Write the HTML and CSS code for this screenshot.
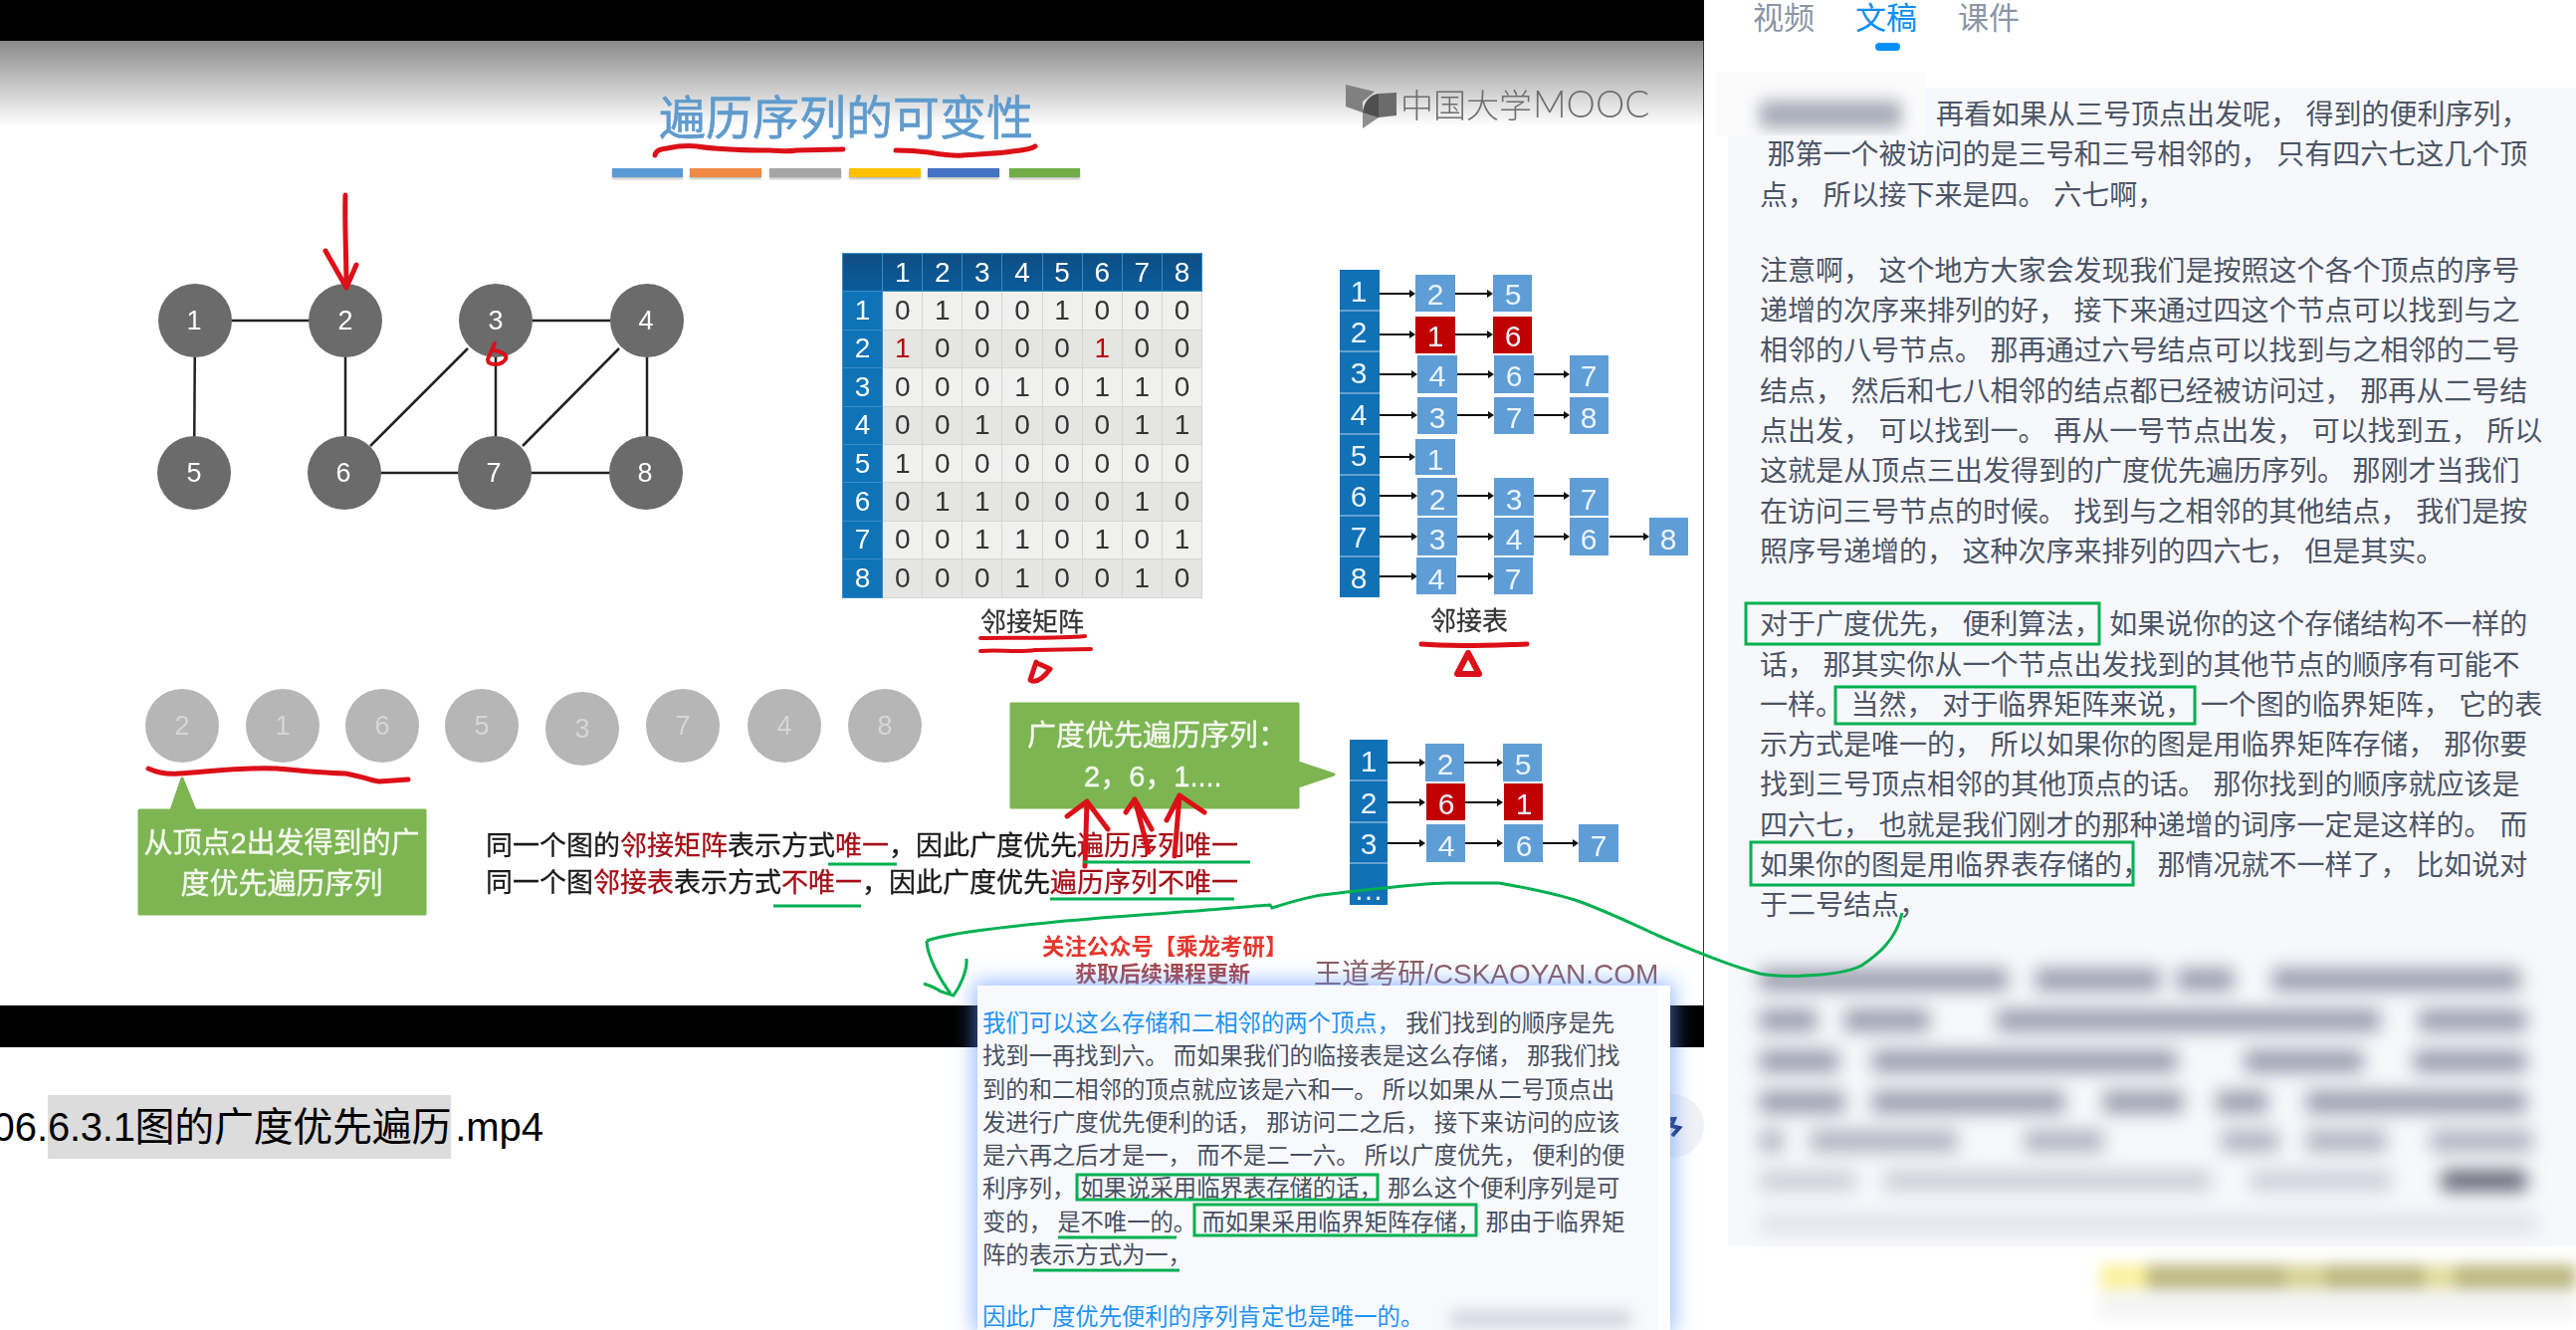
FILE: index.html

```html
<!DOCTYPE html>
<html lang="zh-CN">
<head>
    <title>图的广度优先遍历</title>
    <meta charset="UTF-8">
    <link rel="stylesheet" href="styles.css">
</head>
<body>
<div class="page">
    <div class="player">
        <div class="video">
            <div class="slide">
                <svg class="slide-art" width="1711" height="969" viewBox="0 41 1711 969">
                    <!-- title -->
                    <text class="title" x="662" y="135">遍历序列的可变性</text>
                    <rect class="bar" x="615" y="169" width="71" height="9" fill="#5b9bd5"/>
                    <rect class="bar" x="693" y="169" width="72" height="9" fill="#ee8a44"/>
                    <rect class="bar" x="773" y="169" width="72" height="9" fill="#a5a5a5"/>
                    <rect class="bar" x="853" y="169" width="72" height="9" fill="#ffc000"/>
                    <rect class="bar" x="932" y="169" width="72" height="9" fill="#4472c4"/>
                    <rect class="bar" x="1014" y="169" width="71" height="9" fill="#70ad47"/>

                    <!-- mooc logo -->
                    <polygon fill="#808080" points="1352,85 1381,92 1369,102 1369,113 1352,107"/>
                    <polygon fill="#6b6b6b" points="1385,94 1403,93 1403,116 1385,118"/>
                    <path fill="#4f4f4f" d="M1369,113 C1370,103 1376,95 1385,94 L1385,118 L1369,124 Z"/>
                    <polygon fill="#8f8f8f" points="1369,113 1385,118 1369,129"/>
                    <text class="logo-cn" x="1407" y="118">中国大学</text>
                    <text class="logo-en" x="1540" y="118">MOOC</text>

                    <!-- graph -->
                    <g class="edges">
                        <line x1="196" y1="322" x2="347" y2="322"/>
                        <line x1="196" y1="322" x2="195" y2="475"/>
                        <line x1="347" y1="322" x2="347" y2="475"/>
                        <line x1="498" y1="322" x2="650" y2="322"/>
                        <line x1="498" y1="322" x2="498" y2="475"/>
                        <line x1="650" y1="322" x2="650" y2="475"/>
                        <line x1="346" y1="475" x2="649" y2="475"/>
                        <line x1="470" y1="350" x2="372" y2="448"/>
                        <line x1="622" y1="350" x2="525" y2="448"/>
                    </g>
                    <g class="node">
                        <ellipse cx="196" cy="322" rx="37" ry="37"/><text x="195" y="322">1</text>
                        <ellipse cx="347" cy="322" rx="37" ry="37"/><text x="347" y="322">2</text>
                        <ellipse cx="498" cy="322" rx="37" ry="37"/><text x="498" y="322">3</text>
                        <ellipse cx="650" cy="322" rx="37" ry="37"/><text x="649" y="322">4</text>
                        <ellipse cx="195" cy="475" rx="37" ry="37"/><text x="195" y="475">5</text>
                        <ellipse cx="346" cy="475" rx="37" ry="37"/><text x="345" y="475">6</text>
                        <ellipse cx="497" cy="475" rx="37" ry="37"/><text x="496" y="475">7</text>
                        <ellipse cx="649" cy="475" rx="37" ry="37"/><text x="648" y="475">8</text>
                    </g>

                    <!-- visit order -->
                    <g class="node faded">
                        <ellipse cx="183" cy="729" rx="37" ry="37"/><text x="183" y="729">2</text>
                        <ellipse cx="284" cy="729" rx="37" ry="37"/><text x="284" y="729">1</text>
                        <ellipse cx="384" cy="729" rx="37" ry="37"/><text x="384" y="729">6</text>
                        <ellipse cx="484" cy="729" rx="37" ry="37"/><text x="484" y="729">5</text>
                        <ellipse cx="585" cy="732" rx="37" ry="37"/><text x="585" y="732">3</text>
                        <ellipse cx="686" cy="729" rx="37" ry="37"/><text x="686" y="729">7</text>
                        <ellipse cx="788" cy="729" rx="37" ry="37"/><text x="788" y="729">4</text>
                        <ellipse cx="889" cy="729" rx="37" ry="37"/><text x="889" y="729">8</text>
                    </g>

                    <!-- green callouts -->
                    <path class="callout" d="M183,782 L196,814 L427,814 L427,918 L140,918 L140,814 L172,814 Z"/>
                    <text class="callout-text" x="283" y="857">从顶点2出发得到的广</text>
                    <text class="callout-text" x="283" y="898">度优先遍历序列</text>
                    <path class="callout" d="M1016,707 L1304,707 L1304,766 L1340,778 L1304,790 L1304,811 L1016,811 Z"/>
                    <text class="callout-left" x="1032" y="749">广度优先遍历序列：</text>
                    <text class="callout-left" x="1089" y="790">2，6，1....</text>

                    <!-- statements -->
                    <text class="note" x="488" y="859">同一个图的<tspan class="dark-red">邻接矩阵</tspan>表示方式<tspan class="dark-red">唯一</tspan>，因此广度优先<tspan class="dark-red">遍历序列唯一</tspan></text>
                    <text class="note" x="488" y="896">同一个图<tspan class="dark-red">邻接表</tspan>表示方式<tspan class="dark-red">不唯一</tspan>，因此广度优先<tspan class="dark-red">遍历序列不唯一</tspan></text>

                    <text class="caption" x="1037" y="634">邻接矩阵</text>
                    <text class="caption" x="1476" y="633">邻接表</text>

                    <!-- adjacency list, full -->
                    <g class="list">
                        <rect class="head" x="1346" y="271" width="40" height="329"/>
                        <g class="sep">
                            <line x1="1346" y1="312" x2="1386" y2="312"/>
                            <line x1="1346" y1="353" x2="1386" y2="353"/>
                            <line x1="1346" y1="395" x2="1386" y2="395"/>
                            <line x1="1346" y1="436" x2="1386" y2="436"/>
                            <line x1="1346" y1="477" x2="1386" y2="477"/>
                            <line x1="1346" y1="518" x2="1386" y2="518"/>
                            <line x1="1346" y1="559" x2="1386" y2="559"/>
                        </g>
                        <text x="1365" y="292">1</text><text x="1365" y="333">2</text>
                        <text x="1365" y="374">3</text><text x="1365" y="416">4</text>
                        <text x="1365" y="457">5</text><text x="1365" y="498">6</text>
                        <text x="1365" y="539">7</text><text x="1365" y="580">8</text>

                        <g class="arrows">
                            <path d="M1386,295H1416M1462,295H1494"/>
                            <path d="M1386,336H1416M1462,336H1494"/>
                            <path d="M1386,376H1418M1464,376H1495M1541,376H1571"/>
                            <path d="M1386,417H1418M1464,417H1495M1541,417H1571"/>
                            <path d="M1386,459H1416"/>
                            <path d="M1386,498H1418M1464,498H1495M1541,498H1571"/>
                            <path d="M1386,539H1418M1464,539H1495M1541,539H1571M1617,539H1651"/>
                            <path d="M1386,579H1418M1464,579H1495"/>
                            <path class="tips" d="M1416,291l6,4l-6,4zM1494,291l6,4l-6,4zM1416,332l6,4l-6,4zM1494,332l6,4l-6,4zM1418,372l6,4l-6,4zM1495,372l6,4l-6,4zM1571,372l6,4l-6,4zM1418,413l6,4l-6,4zM1495,413l6,4l-6,4zM1571,413l6,4l-6,4zM1416,455l6,4l-6,4zM1418,494l6,4l-6,4zM1495,494l6,4l-6,4zM1571,494l6,4l-6,4zM1418,535l6,4l-6,4zM1495,535l6,4l-6,4zM1571,535l6,4l-6,4zM1651,535l6,4l-6,4zM1418,575l6,4l-6,4zM1495,575l6,4l-6,4z"/>
                        </g>

                        <rect x="1422" y="276" width="40" height="37"/><text x="1442" y="295">2</text>
                        <rect x="1500" y="276" width="39" height="37"/><text x="1520" y="295">5</text>
                        <rect class="hot" x="1422" y="318" width="40" height="37"/><text x="1442" y="337">1</text>
                        <rect class="hot" x="1500" y="318" width="39" height="37"/><text x="1520" y="337">6</text>
                        <rect x="1424" y="357" width="40" height="38"/><text x="1444" y="377">4</text>
                        <rect x="1501" y="357" width="40" height="38"/><text x="1521" y="377">6</text>
                        <rect x="1577" y="357" width="39" height="38"/><text x="1596" y="377">7</text>
                        <rect x="1424" y="399" width="40" height="37"/><text x="1444" y="419">3</text>
                        <rect x="1501" y="399" width="40" height="37"/><text x="1521" y="419">7</text>
                        <rect x="1577" y="399" width="39" height="37"/><text x="1596" y="419">8</text>
                        <rect x="1422" y="441" width="40" height="36"/><text x="1442" y="461">1</text>
                        <rect x="1424" y="480" width="40" height="38"/><text x="1444" y="501">2</text>
                        <rect x="1501" y="480" width="40" height="38"/><text x="1521" y="501">3</text>
                        <rect x="1577" y="480" width="39" height="38"/><text x="1596" y="501">7</text>
                        <rect x="1424" y="520" width="40" height="38"/><text x="1444" y="541">3</text>
                        <rect x="1501" y="520" width="40" height="38"/><text x="1521" y="541">4</text>
                        <rect x="1577" y="520" width="39" height="38"/><text x="1596" y="541">6</text>
                        <rect x="1657" y="520" width="39" height="38"/><text x="1676" y="541">8</text>
                        <rect x="1423" y="560" width="40" height="37"/><text x="1443" y="581">4</text>
                        <rect x="1501" y="560" width="39" height="37"/><text x="1520" y="581">7</text>
                    </g>

                    <!-- adjacency list, second storage -->
                    <g class="list">
                        <rect class="head" x="1356" y="743" width="38" height="166"/>
                        <g class="sep">
                            <line x1="1356" y1="784" x2="1394" y2="784"/>
                            <line x1="1356" y1="826" x2="1394" y2="826"/>
                            <line x1="1356" y1="867" x2="1394" y2="867"/>
                        </g>
                        <text x="1375" y="764">1</text><text x="1375" y="806">2</text><text x="1375" y="847">3</text>
                        <text x="1375" y="893">…</text>
                        <g class="arrows">
                            <path d="M1394,766H1426M1471,766H1504"/>
                            <path d="M1394,806H1426M1471,806H1504"/>
                            <path d="M1394,847H1426M1471,847H1504M1549,847H1580"/>
                            <path class="tips" d="M1426,762l6,4l-6,4zM1504,762l6,4l-6,4zM1426,802l6,4l-6,4zM1504,802l6,4l-6,4zM1426,843l6,4l-6,4zM1504,843l6,4l-6,4zM1580,843l6,4l-6,4z"/>
                        </g>
                        <rect x="1432" y="747" width="39" height="38"/><text x="1452" y="767">2</text>
                        <rect x="1510" y="747" width="39" height="38"/><text x="1530" y="767">5</text>
                        <rect class="hot" x="1433" y="787" width="39" height="37"/><text x="1453" y="807">6</text>
                        <rect class="hot" x="1511" y="787" width="39" height="37"/><text x="1531" y="807">1</text>
                        <rect x="1433" y="828" width="39" height="38"/><text x="1453" y="849">4</text>
                        <rect x="1511" y="828" width="39" height="38"/><text x="1531" y="849">6</text>
                        <rect x="1586" y="828" width="40" height="38"/><text x="1606" y="849">7</text>
                    </g>

                    <!-- watermark -->
                    <text class="mark-red" x="1047" y="959">关注公众号【乘龙考研】</text>
                    <text class="mark-dim" x="1080" y="986">获取后续课程更新</text>
                    <text class="mark-site" x="1320" y="988">王道考研/CSKAOYAN.COM</text>

                    <!-- pen strokes on the video -->
                    <g class="pen">
                        <path d="M658,156 C659,151 663,150 670,149 C680,147 690,146 700,147 C720,150 750,151 773,151 C785,152 795,152 800,151 L847,150"/>
                        <path d="M900,151 C910,151 925,152 933,153 C945,155 955,157 967,156 C985,155 1005,154 1017,152 C1028,151 1036,150 1040,147"/>
                        <path d="M347,196 C346,220 348,260 348,289 M327,252 L348,289 L358,266"/>
                        <path class="thin" d="M497,345 L490,361 C490,367 500,367 505,364 C510,360 511,355 497,352"/>
                        <path d="M149,772 C160,777 170,778 180,777 C210,775 250,770 278,772 C310,775 330,777 347,777 C365,780 375,785 381,785 L410,783"/>
                        <path class="thin" d="M985,641 C1010,640 1060,642 1090,639"/>
                        <path class="thin" d="M985,654 C1005,652 1020,656 1040,653 L1096,652"/>
                        <path d="M1041,665 L1035,683 C1040,686 1046,684 1055,672 L1044,667"/>
                        <path d="M1428,647 C1460,650 1500,648 1534,647"/>
                        <path class="wide" d="M1475,656 L1464,677 L1486,677 Z"/>
                        <path d="M1090,870 L1092,805 M1072,820 L1092,805 L1113,833"/>
                        <path d="M1154,856 L1140,803 M1131,816 L1140,803 L1157,833"/>
                        <path d="M1180,860 L1185,799 M1172,824 L1185,799 L1210,816"/>
                    </g>
                </svg>

                <table class="matrix">
                    <tr><th></th><th>1</th><th>2</th><th>3</th><th>4</th><th>5</th><th>6</th><th>7</th><th>8</th></tr>
                    <tr><th>1</th><td>0</td><td>1</td><td>0</td><td>0</td><td>1</td><td>0</td><td>0</td><td>0</td></tr>
                    <tr><th>2</th><td class="red">1</td><td>0</td><td>0</td><td>0</td><td>0</td><td class="red">1</td><td>0</td><td>0</td></tr>
                    <tr><th>3</th><td>0</td><td>0</td><td>0</td><td>1</td><td>0</td><td>1</td><td>1</td><td>0</td></tr>
                    <tr><th>4</th><td>0</td><td>0</td><td>1</td><td>0</td><td>0</td><td>0</td><td>1</td><td>1</td></tr>
                    <tr><th>5</th><td>1</td><td>0</td><td>0</td><td>0</td><td>0</td><td>0</td><td>0</td><td>0</td></tr>
                    <tr><th>6</th><td>0</td><td>1</td><td>1</td><td>0</td><td>0</td><td>0</td><td>1</td><td>0</td></tr>
                    <tr><th>7</th><td>0</td><td>0</td><td>1</td><td>1</td><td>0</td><td>1</td><td>0</td><td>1</td></tr>
                    <tr><th>8</th><td>0</td><td>0</td><td>0</td><td>1</td><td>0</td><td>0</td><td>1</td><td>0</td></tr>
                </table>
            </div>
        </div>

        <div class="file-name">06.<span class="selected">6.3.1图的广度优先遍历</span>.mp4</div>

        <div class="share-btn">
            <svg width="64" height="64" viewBox="0 0 64 64"><path d="M24,25 H34 L31,32 L39,34 L32,42"/></svg>
        </div>
    </div>

    <div class="side">
        <div class="tabs">
            <div class="tab">视频</div>
            <div class="tab active">文稿</div>
            <div class="tab">课件</div>
        </div>
        <div class="transcript">
            <div class="lead-patch"><span class="lead-blur"></span></div>
            <p class="para first">再看如果从三号顶点出发呢， 得到的便利序列，<br>&nbsp;那第一个被访问的是三号和三号相邻的， 只有四六七这几个顶<br>点， 所以接下来是四。 六七啊，</p>
            <p class="para second">注意啊， 这个地方大家会发现我们是按照这个各个顶点的序号<br>递增的次序来排列的好， 接下来通过四这个节点可以找到与之<br>相邻的八号节点。 那再通过六号结点可以找到与之相邻的二号<br>结点， 然后和七八相邻的结点都已经被访问过， 那再从二号结<br>点出发， 可以找到一。 再从一号节点出发， 可以找到五， 所以<br>这就是从顶点三出发得到的广度优先遍历序列。 那刚才当我们<br>在访问三号节点的时候。 找到与之相邻的其他结点， 我们是按<br>照序号递增的， 这种次序来排列的四六七， 但是其实。</p>
            <p class="para third">对于广度优先， 便利算法， 如果说你的这个存储结构不一样的<br>话， 那其实你从一个节点出发找到的其他节点的顺序有可能不<br>一样。 当然， 对于临界矩阵来说， 一个图的临界矩阵， 它的表<br>示方式是唯一的， 所以如果你的图是用临界矩阵存储， 那你要<br>找到三号顶点相邻的其他顶点的话。 那你找到的顺序就应该是<br>四六七， 也就是我们刚才的那种递增的词序一定是这样的。 而<br>如果你的图是用临界表存储的， 那情况就不一样了， 比如说对<br>于二号结点，</p>
            <svg class="blurred" width="852" height="301">
                <defs><filter id="soft" x="-5%" y="-10%" width="110%" height="120%"><feGaussianBlur stdDeviation="9"/></filter></defs>
                <g filter="url(#soft)" fill="#989cac">
                    <rect x="32" y="18" width="249" height="22"/><rect x="309" y="18" width="125" height="22"/><rect x="451" y="18" width="57" height="22"/><rect x="547" y="18" width="249" height="22"/>
                    <rect x="32" y="59" width="57" height="22"/><rect x="117" y="59" width="85" height="22"/><rect x="270" y="59" width="385" height="22"/><rect x="694" y="59" width="108" height="22"/>
                    <rect x="32" y="100" width="79" height="22"/><rect x="145" y="100" width="306" height="22"/><rect x="519" y="100" width="119" height="22"/><rect x="689" y="100" width="113" height="22"/>
                    <rect x="32" y="141" width="85" height="22"/><rect x="145" y="141" width="193" height="22"/><rect x="377" y="141" width="80" height="22"/><rect x="491" y="141" width="51" height="22"/><rect x="581" y="141" width="221" height="22"/>
                    <g opacity=".75">
                        <rect x="32" y="180" width="23" height="22"/><rect x="83" y="180" width="147" height="22"/><rect x="298" y="180" width="79" height="22"/><rect x="496" y="180" width="57" height="22"/><rect x="581" y="180" width="80" height="22"/><rect x="706" y="180" width="102" height="22"/>
                    </g>
                    <g opacity=".45">
                        <rect x="32" y="221" width="96" height="20"/><rect x="157" y="221" width="328" height="20"/><rect x="525" y="221" width="141" height="20"/>
                    </g>
                    <rect x="717" y="221" width="85" height="20" fill="#5d6170"/>
                    <rect x="32" y="264" width="781" height="20" opacity=".22"/>
                </g>
            </svg>
        </div>
        <svg class="yellow" width="852" height="84">
            <defs><filter id="soft-y" x="-5%" y="-40%" width="110%" height="180%"><feGaussianBlur stdDeviation="7"/></filter></defs>
            <g filter="url(#soft-y)">
                <rect x="374" y="18" width="46" height="26" fill="#fbf2a0"/>
                <rect x="420" y="18" width="432" height="26" fill="#bfba84"/>
                <rect x="560" y="18" width="40" height="26" fill="#d8d49a"/>
                <rect x="700" y="18" width="30" height="26" fill="#e2dea0"/>
                <rect x="374" y="46" width="478" height="26" fill="#f4f4f4"/>
            </g>
        </svg>
    </div>
</div>

<div class="popup">
    <div class="popup-body">
        <p class="popup-para"><span class="blue">我们可以这么存储和二相邻的两个顶点，</span> 我们找到的顺序是先<br>找到一再找到六。 而如果我们的临接表是这么存储， 那我们找<br>到的和二相邻的顶点就应该是六和一。 所以如果从二号顶点出<br>发进行广度优先便利的话， 那访问二之后， 接下来访问的应该<br>是六再之后才是一， 而不是二一六。 所以广度优先， 便利的便<br>利序列， 如果说采用临界表存储的话， 那么这个便利序列是可<br>变的， 是不唯一的。 而如果采用临界矩阵存储， 那由于临界矩<br>阵的表示方式为一，</p>
        <p class="popup-para"><span class="blue">因此广度优先便利的序列肯定也是唯一的。</span><span class="popup-blur"></span></p>
    </div>
</div>

<!-- green pen strokes lie over everything -->
<svg class="annotations" width="2588" height="1336">
    <path d="M931,945 C950,938 1000,932 1052,927 C1100,922 1150,919 1187,916 C1220,914 1250,911 1276,909 L1278,912 C1300,905 1320,899 1345,897 C1390,892 1430,887 1455,887 L1506,887 C1540,893 1565,898 1588,906 C1620,918 1640,928 1664,939 C1690,950 1730,968 1768,978 C1785,981 1800,981 1813,980 C1840,979 1860,975 1870,970 C1885,960 1905,945 1911,917"/>
    <path d="M931,945 C931,960 945,985 955,998 M971,963 C972,975 965,990 958,1000 L945,996 C940,992 934,990 928,988"/>
    <path d="M832,868 H901 M777,910 H865 M1088,866 H1256 M1055,903 H1240"/>
    <path d="M1063,1243 H1182 M1038,1276 H1185"/>
    <rect x="1082" y="1180" width="302" height="25"/>
    <rect x="1200" y="1210" width="283" height="31"/>
    <rect x="1754" y="606" width="355" height="41"/>
    <rect x="1844" y="690" width="361" height="37"/>
    <rect x="1759" y="846" width="384" height="43"/>
</svg>
</body>
</html>
```

FILE: styles.css

```css
html, body {
    margin: 0;
    padding: 0;
}
body {
    width: 2588px;
    height: 1336px;
    overflow: hidden;
    position: relative;
    background: #fff;
    font-family: "Liberation Sans", "Noto Sans CJK SC", sans-serif;
}
.page {
    display: flex;
    height: 1336px;
}

/* left column */
.player {
    width: 1712px;
    flex: none;
    position: relative;
}
.video {
    background: #000;
    padding: 41px 0 42px;
}
.slide {
    height: 969px;
    width: 1711px;
    position: relative;
    background: linear-gradient(#8a8a8a, #fff 86px);
    border-right: 1px solid #333;
    box-sizing: content-box;
    filter: blur(.5px);
}
.slide-art {
    display: block;
}
.slide-art text {
    font-family: "Liberation Sans", "Noto Sans CJK SC", sans-serif;
}
.title {
    font-size: 47px;
    fill: #5f9bcd;
    stroke: #5f9bcd;
    stroke-width: .6;
}
.bar {
    filter: drop-shadow(0 2px 1px rgba(0, 0, 0, .25));
}
.logo-cn {
    font-size: 33px;
    font-weight: 300;
    fill: #6e6e6e;
}
.slide-art .logo-en {
    font-family: Lato, sans-serif;
    font-size: 37px;
    font-weight: 300;
    fill: #6e6e6e;
}
.edges line {
    stroke: #222;
    stroke-width: 2.5;
}
.node ellipse {
    fill: #6b6b6b;
}
.node text {
    fill: #fff;
    font-size: 27px;
    text-anchor: middle;
    dominant-baseline: central;
}
.faded ellipse {
    fill: #b6b6b6;
}
.faded text {
    fill: #d6d6d6;
}
.callout {
    fill: #7cb552;
    stroke: #7cb552;
    stroke-width: 3;
    stroke-linejoin: round;
}
.callout-text {
    font-size: 29px;
    fill: #f4f8ee;
    stroke: #f4f8ee;
    stroke-width: .4;
    text-anchor: middle;
}
.callout-left {
    font-size: 29px;
    fill: #f4f8ee;
    stroke: #f4f8ee;
    stroke-width: .4;
}
.note {
    font-size: 27px;
    fill: #1a1a1a;
    stroke: #1a1a1a;
    stroke-width: .3;
}
.note .dark-red {
    fill: #a50f17;
    stroke: #a50f17;
}
.caption {
    font-size: 26px;
    fill: #333;
    stroke: #333;
    stroke-width: .3;
    text-anchor: middle;
}
.list rect {
    fill: #5f9dd6;
}
.list .head {
    fill: #1071b6;
}
.list .hot {
    fill: #c00000;
}
.list text {
    fill: #eaf3fb;
    font-size: 30px;
    text-anchor: middle;
    dominant-baseline: central;
}
.sep line {
    stroke: #7fb2d9;
    stroke-width: 1.5;
}
.arrows path {
    stroke: #111;
    stroke-width: 2;
    fill: none;
}
.arrows .tips {
    fill: #111;
    stroke: none;
}
.mark-red {
    font-size: 22.4px;
    font-weight: bold;
    fill: #e8352c;
}
.mark-dim {
    font-size: 22px;
    font-weight: bold;
    fill: #a8474a;
}
.mark-site {
    font-size: 28px;
    fill: #8d5c60;
}
.pen path {
    fill: none;
    stroke: #dc1018;
    stroke-width: 5;
    stroke-linecap: round;
    stroke-linejoin: round;
}
.pen .thin {
    stroke-width: 4;
}
.pen .wide {
    stroke-width: 6;
}

.matrix {
    position: absolute;
    left: 846px;
    top: 213px;
    width: 362px;
    border-collapse: collapse;
    table-layout: fixed;
    font-size: 28px;
    line-height: 30px;
    text-align: center;
}
.matrix th, .matrix td {
    padding: 0;
    height: 37.4px;
    border: 1px solid #d6d6d6;
    font-weight: normal;
}
.matrix th {
    background: #0f73b8;
    color: #fff;
    border-color: #3a8cc5;
}
.matrix tr:first-child th {
    background: linear-gradient(#0d4e83, #0a5c9c);
}
.matrix tr:nth-child(even) td {
    background: #f0f0ef;
}
.matrix tr:nth-child(odd) td {
    background: #e5e5e3;
}
.matrix td {
    color: #333;
}
.matrix .red {
    color: #c00000;
}

.file-name {
    margin: 48px 0 0 -7.5px;
    font-size: 40px;
    line-height: 64px;
    color: #000;
    white-space: nowrap;
}
.selected {
    display: inline-block;
    background: #dcdcdc;
    height: 64px;
    letter-spacing: -.3px;
    margin-right: 4px;
}
.share-btn {
    position: absolute;
    left: 1648px;
    top: 1099px;
    width: 64px;
    height: 64px;
    border-radius: 50%;
    background: #f1f2f6;
}
.share-btn path {
    fill: none;
    stroke: #1b2f6e;
    stroke-width: 4;
}

/* right column */
.side {
    flex: 1;
    min-width: 0;
}
.tabs {
    display: flex;
    gap: 41px;
    height: 88px;
    padding-left: 49px;
    box-sizing: border-box;
    font-family: "Noto Sans CJK SC", sans-serif;
}
.tab {
    position: relative;
    font-size: 31px;
    line-height: 32px;
    color: #8b95a5;
}
.tab.active {
    color: #0d8ff2;
}
.tab.active::after {
    content: "";
    position: absolute;
    left: 20px;
    top: 43px;
    width: 25px;
    height: 8px;
    border-radius: 4px;
    background: #0090ff;
}
.transcript {
    position: relative;
    height: 1164px;
    margin-left: 24px;
    padding: 5px 0 0 32px;
    box-sizing: border-box;
    background: #f7f8fc;
    font-family: "Noto Sans CJK SC", sans-serif;
}
.para {
    margin: 0;
    font-size: 28px;
    line-height: 40.3px;
    color: #4b5566;
    white-space: nowrap;
    word-spacing: 1.3px;
}
.para.first {
    text-indent: 177px;
    margin-bottom: 36px;
}
.para.second {
    margin-bottom: 33px;
}
.para.third {
    margin-bottom: 27px;
}
.lead-patch {
    position: absolute;
    left: -12px;
    top: -15px;
    width: 210px;
    height: 63px;
    background: #fbfbfc;
    overflow: hidden;
}
.lead-blur {
    display: block;
    margin: 28px 0 0 44px;
    width: 142px;
    height: 28px;
    background: #a9adba;
    filter: blur(8px);
}
.blurred {
    display: block;
    margin-left: -32px;
    overflow: visible;
}
.yellow {
    display: block;
    margin-left: 24px;
}

/* transcript popup over the video */
.popup {
    position: absolute;
    left: 982px;
    top: 990px;
    width: 696px;
    height: 346px;
    background: #fff;
    box-shadow: 0 0 20px 3px rgba(86, 146, 255, .65);
}
.popup-body {
    width: 684px;
    height: 346px;
    padding: 20px 0 0 5px;
    box-sizing: border-box;
    background: #f8f9fd;
    font-family: "Noto Sans CJK SC", sans-serif;
}
.popup-para {
    margin: 0 0 29px;
    font-size: 23.33px;
    line-height: 33.3px;
    color: #47505f;
    white-space: nowrap;
}
.blue {
    color: #1f93f3;
}
.popup-blur {
    display: inline-block;
    width: 180px;
    height: 18px;
    margin-left: 28px;
    background: #d5d8e2;
    filter: blur(7px);
    vertical-align: middle;
}

.annotations {
    position: absolute;
    left: 0;
    top: 0;
    pointer-events: none;
}
.annotations path, .annotations rect {
    fill: none;
    stroke: #00b050;
    stroke-width: 3;
}
```
